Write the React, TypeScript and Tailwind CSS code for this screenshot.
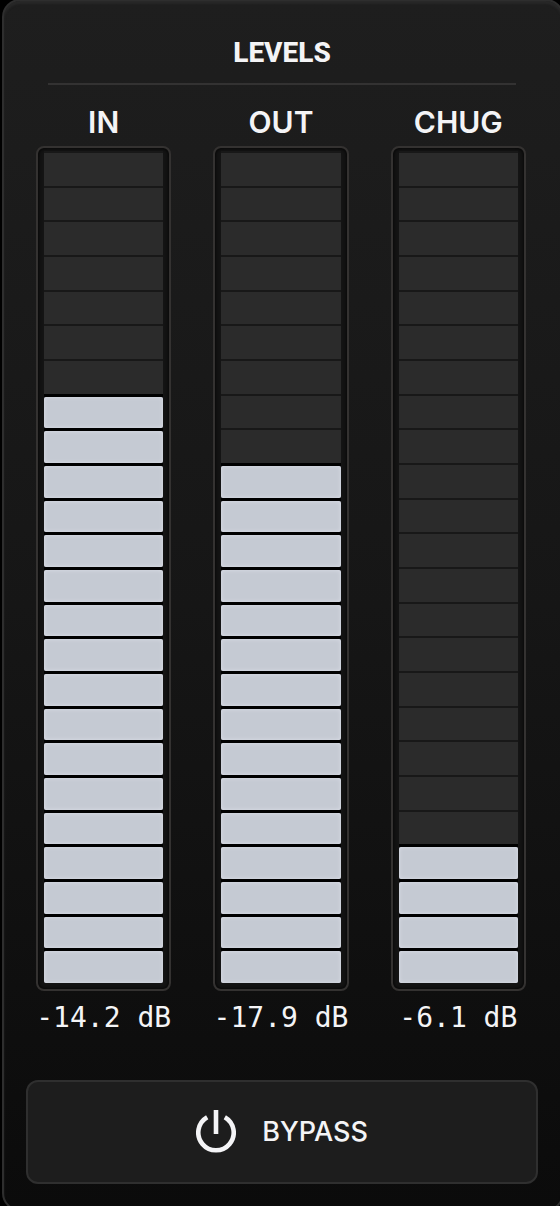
import { useState } from 'react';

const SEGMENTS = 24;

const channels = [
  { name: 'IN', lit: 17, level: '-14.2 dB' },
  { name: 'OUT', lit: 15, level: '-17.9 dB' },
  { name: 'CHUG', lit: 4, level: '-6.1 dB' },
];

function PowerIcon() {
  return (
    <svg viewBox="0 0 40 44" className="w-10 h-11" fill="none" stroke="currentColor" strokeWidth="4.6" aria-hidden="true">
      <path d="M11.2 7.2a17.7 17.7 0 1 0 17.6 0" />
      <path d="M20 0v24" />
    </svg>
  );
}

function Meter({ name, lit, level }: { name: string; lit: number; level: string }) {
  return (
    <div className="flex flex-col items-center">
      <h2 className="text-[30px] leading-[36px] font-semibold">{name}</h2>
      <div
        role="meter"
        aria-label={name}
        aria-valuemin={0}
        aria-valuemax={SEGMENTS}
        aria-valuenow={lit}
        aria-valuetext={level}
        className="mt-[6px] grid w-full flex-1 auto-rows-fr rounded-lg border-2 border-[#343231] bg-[#141414] px-[6px] pt-[3px] pb-[6px] shadow-[inset_0_0_4px_#000]"
      >
        {Array.from({ length: SEGMENTS }, (_, i) =>
          i >= SEGMENTS - lit ? (
            <div key={i} className="flex bg-black pt-[3px]">
              <div className="flex-1 rounded-xs bg-[#c5cad3] shadow-[inset_0_0_4px_#dcdfe8]" />
            </div>
          ) : (
            <div key={i} className="border-t-2 border-[#181818] bg-[#2b2b2b]" />
          )
        )}
      </div>
      <p className="mt-[9px] font-['DejaVu_Sans_Mono',monospace] text-[28px] leading-[36px] whitespace-nowrap">{level}</p>
    </div>
  );
}

export default function App() {
  const [bypassed, setBypassed] = useState(false);

  return (
    <div className="relative min-h-screen overflow-hidden bg-black font-['Inter',sans-serif] text-[#f4f4f6]">
      {/* panel frame, runs past the window edges */}
      <div className="absolute -top-[1px] left-[2px] -right-[4px] -bottom-[5px] rounded-[18px] border-2 border-[#2e2e2e] bg-linear-to-b from-[#1e1e1e] via-[#161616] to-[#0b0b0b] shadow-[inset_0_3px_2px_#282828]" />

      <main className="relative flex min-h-screen flex-col pt-[35px] pb-[22px]">
        <header className="mr-[44px] ml-[48px] border-b-2 border-[#333232] pb-[12px]">
          <h1 className="text-center font-['Roboto',sans-serif] text-[28px] leading-[36px] font-extrabold">LEVELS</h1>
        </header>

        <section className="mt-[19px] mr-[34px] ml-[36px] grid flex-1 grid-cols-3 gap-[42px]">
          {channels.map((channel) => (
            <Meter key={channel.name} {...channel} />
          ))}
        </section>

        <button
          type="button"
          aria-pressed={bypassed}
          onClick={() => setBypassed(!bypassed)}
          className="mt-[44px] mr-[22px] ml-[26px] flex h-[104px] items-center justify-center gap-[26px] rounded-xl border-2 border-[#2f2f2f] bg-[#1d1d1d] text-[27px] font-medium"
        >
          <PowerIcon />
          BYPASS
        </button>
      </main>
    </div>
  );
}
